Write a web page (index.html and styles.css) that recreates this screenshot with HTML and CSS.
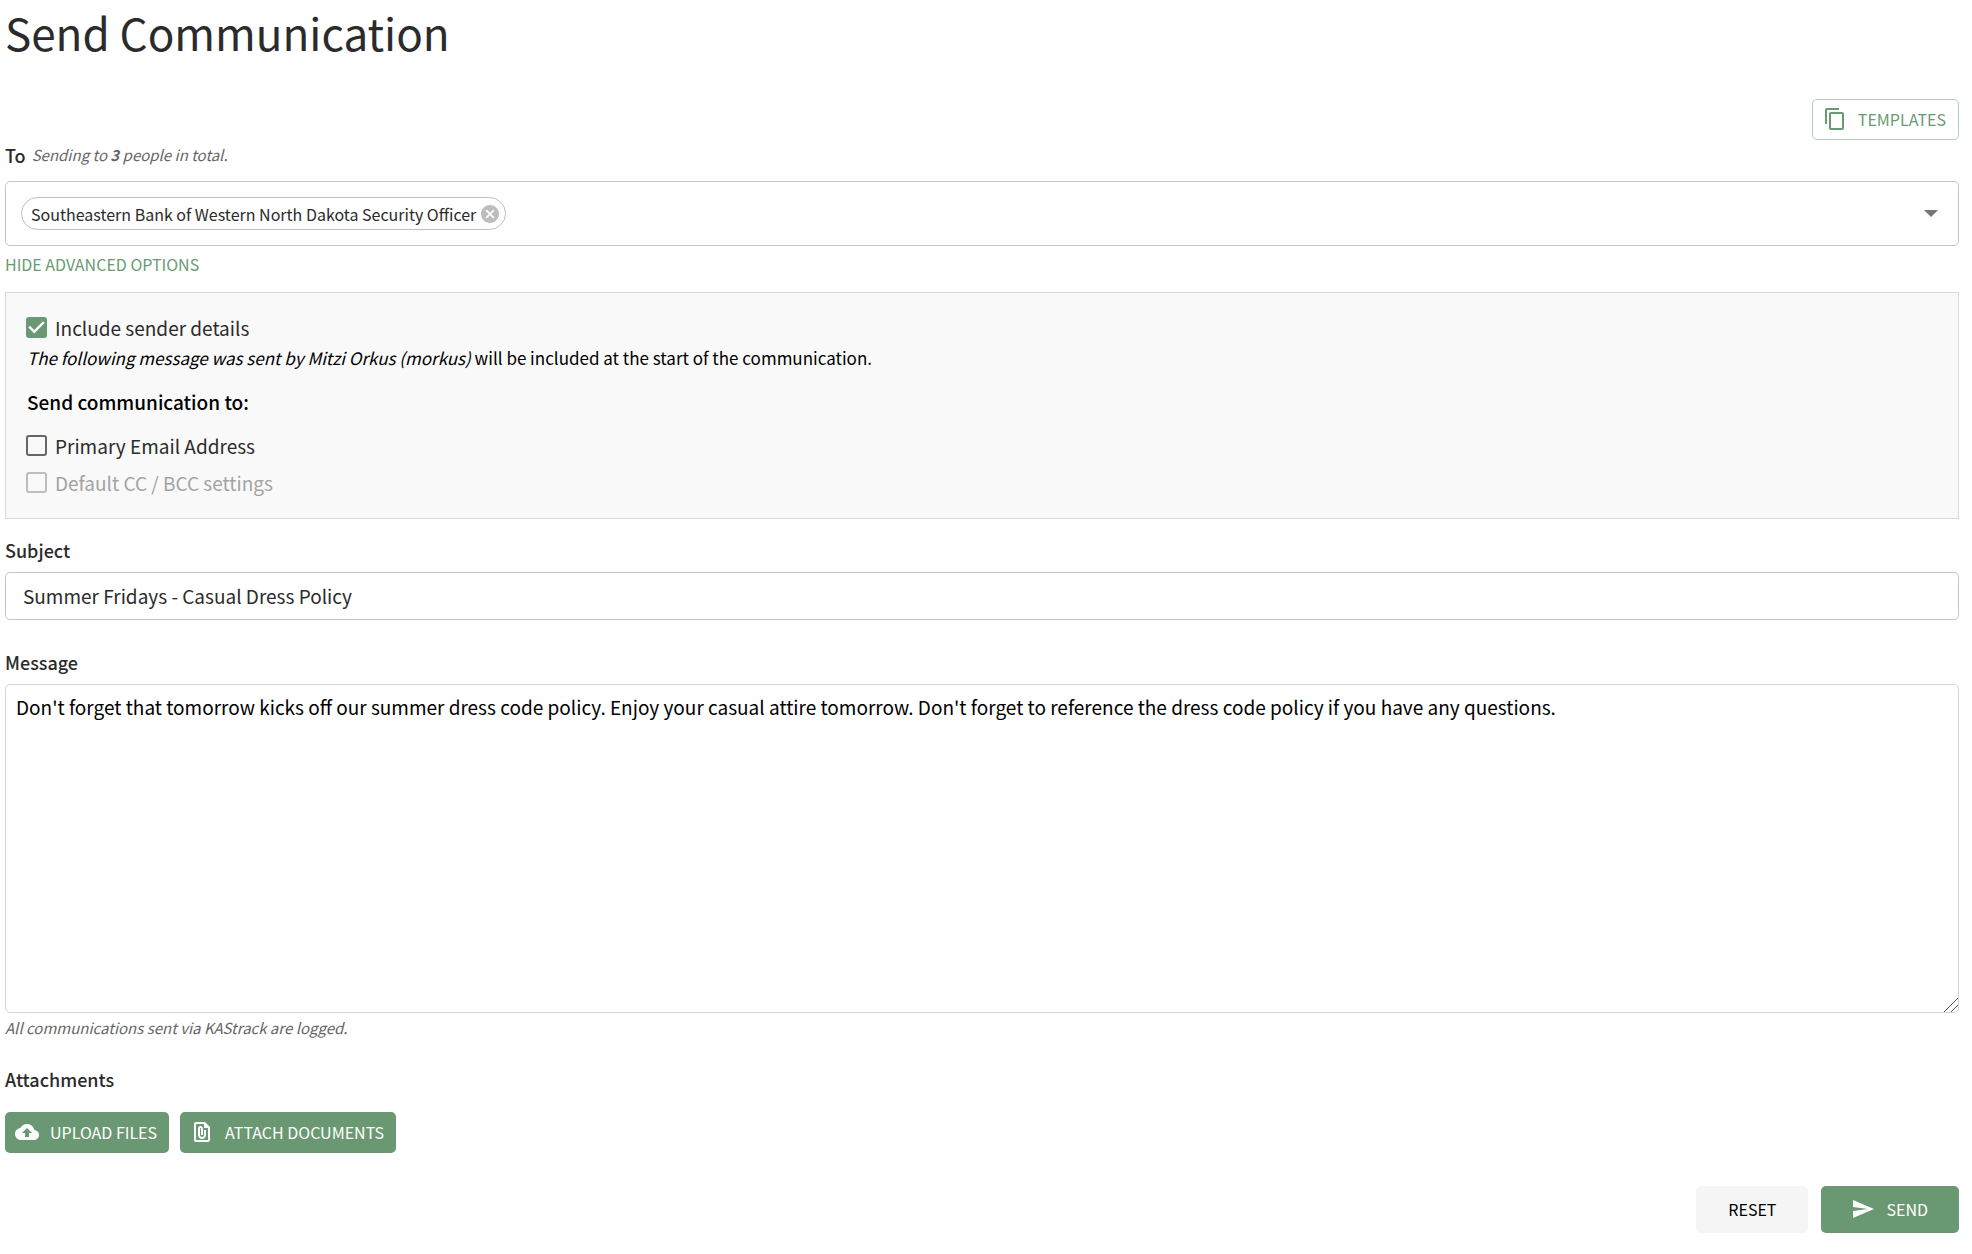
FILE: index.html
```html
<!DOCTYPE html>
<html lang="en">
<head>
  <meta charset="UTF-8">
  <meta name="viewport" content="width=device-width, initial-scale=1">
  <title>Send Communication</title>
  <link rel="stylesheet" href="styles.css">
</head>
<body>
<h1>Send Communication</h1>
<form class="communication">
  <div class="toolbar">
    <button type="button" class="btn btn-outline">
      <svg class="icon" viewBox="0 0 24 24"><path d="M16 1H4c-1.100 0-2 .9-2 2v14h2V3h12V1zm3 4H8c-1.100 0-2 .9-2 2v14c0 1.100.9 2 2 2h11c1.100 0 2-.9 2-2V7c0-1.100-.9-2-2-2zm0 16H8V7h11v14z"/></svg>
      TEMPLATES
    </button>
  </div>

  <div class="to-line">
    <label for="recipients">To</label>
    <span class="hint">Sending to <b>3</b> people in total.</span>
  </div>
  <div class="recipients">
    <div class="chip">
      Southeastern Bank of Western North Dakota Security Officer
      <button type="button" class="chip-delete" aria-label="Remove">
        <svg viewBox="2 2 20 20"><path d="M12 2C6.470 2 2 6.470 2 12s4.470 10 10 10 10-4.470 10-10S17.530 2 12 2zm5 13.590L15.590 17 12 13.410 8.410 17 7 15.590 10.590 12 7 8.410 8.410 7 12 10.590 15.590 7 17 8.410 13.410 12 17 15.590z"/></svg>
      </button>
    </div>
    <button type="button" class="open" id="recipients" aria-haspopup="listbox"></button>
  </div>
  <a href="#advanced" class="toggle">HIDE ADVANCED OPTIONS</a>

  <div class="advanced" id="advanced">
    <label class="check"><input type="checkbox" checked>Include sender details</label>
    <p class="note"><i>The following message was sent by Mitzi Orkus (morkus)</i> will be included at the start of the communication.</p>
    <h2>Send communication to:</h2>
    <label class="check"><input type="checkbox">Primary Email Address</label>
    <label class="check disabled"><input type="checkbox" disabled>Default CC / BCC settings</label>
  </div>

  <div class="field subject">
    <label for="subject">Subject</label>
    <input type="text" id="subject" value="Summer Fridays - Casual Dress Policy">
  </div>

  <div class="field message">
    <label for="message">Message</label>
    <textarea id="message">Don't forget that tomorrow kicks off our summer dress code policy. Enjoy your casual attire tomorrow. Don't forget to reference the dress code policy if you have any questions.</textarea>
    <p class="hint">All communications sent via KAStrack are logged.</p>
  </div>

  <h3>Attachments</h3>
  <div class="attachments">
    <button type="button" class="btn btn-green">
      <svg class="icon" viewBox="0 0 24 24"><path d="M19.350 10.040C18.670 6.590 15.640 4 12 4 9.110 4 6.600 5.640 5.350 8.040 2.340 8.360 0 10.910 0 14c0 3.310 2.690 6 6 6h13c2.760 0 5-2.240 5-5 0-2.640-2.050-4.780-4.650-4.960zM14 13v4h-4v-4H7l5-5 5 5h-3z"/></svg>
      UPLOAD FILES
    </button>
    <button type="button" class="btn btn-green">
      <svg class="icon" viewBox="0 0 24 24"><path d="M15 2H6c-1.100 0-2 .9-2 2v16c0 1.100.9 2 2 2h12c1.100 0 2-.9 2-2V7l-5-5zM6 20V4h8v4h4v12H6zm10-10v5c0 2.210-1.790 4-4 4s-4-1.790-4-4V8.500C8 7.030 9.260 5.860 10.760 6.010 12.060 6.140 13 7.330 13 8.640V15h-2V8.500c0-.28-.22-.5-.5-.5s-.5.22-.5.5V15c0 1.100.9 2 2 2s2-.9 2-2v-5h2z"/></svg>
      ATTACH DOCUMENTS
    </button>
  </div>

  <div class="actions">
    <button type="reset" class="btn btn-reset">RESET</button>
    <button type="submit" class="btn btn-green btn-send">
      <svg class="icon" viewBox="0 0 24 24"><path d="M2 21l21-9L2 3v7l15 2-15 2z"/></svg>
      SEND
    </button>
  </div>
</form>
</body>
</html>
```
FILE: styles.css
```css
* {
  box-sizing: border-box;
}

body {
  margin: 0;
  padding: 0 13px 20px 5px;
  font-family: 'Source Sans Pro', 'Noto Sans CJK SC', sans-serif;
  font-size: 19px;
  line-height: 32px;
  color: #2b2b2b;
  background-color: #fff;
}

button, input, textarea {
  font-family: inherit;
  font-size: inherit;
  color: inherit;
}

h1, h2, h3, p {
  margin: 0;
}

h1 {
  font-size: 44px;
  font-weight: 400;
  line-height: 64px;
}

h3, .field label, .to-line label {
  font-size: 18px;
  font-weight: 500;
  line-height: 30px;
}

.hint {
  font-size: 15px;
  line-height: 24px;
  font-style: italic;
  color: #666;
}

/* buttons */
.btn {
  display: inline-flex;
  align-items: center;
  justify-content: center;
  gap: 11px;
  height: 41px;
  padding: 0 12px 2px 10px;
  border: 0;
  border-radius: 5px;
  font-size: 16px;
  cursor: pointer;
}

.icon {
  width: 24px;
  height: 24px;
  fill: currentColor;
}

.btn-outline {
  border: 1px solid #b5cdb8;
  color: #6a9a72;
  background-color: #fff;
}

.btn-green {
  color: #fff;
  background-color: #6a9872;
}

.toolbar {
  display: flex;
  justify-content: flex-end;
  margin-top: 35px;
}

/* recipients */
.to-line {
  display: flex;
  align-items: center;
  gap: 6px;
  margin-bottom: 11px;
}

.recipients {
  display: flex;
  align-items: center;
  justify-content: space-between;
  min-height: 65px;
  padding: 15px;
  border: 1px solid #c4c4c4;
  border-radius: 5px;
}

.chip {
  display: flex;
  align-items: center;
  gap: 5px;
  height: 33px;
  padding: 0 6px 0 9px;
  border: 1px solid #bdbdbd;
  border-radius: 17px;
  font-size: 16px;
  line-height: 30px;
}

.chip-delete {
  display: flex;
  width: 18px;
  height: 18px;
  padding: 0;
  border: 0;
  background: none;
  cursor: pointer;
}

.chip-delete svg {
  width: 18px;
  height: 18px;
  fill: #bdbdbd;
}

.open {
  display: flex;
  padding: 5px;
  border: 0;
  background: none;
  cursor: pointer;
}

.open::before {
  content: '';
  border: 7px solid transparent;
  border-top-color: #757575;
  border-bottom: 0;
}

.toggle {
  display: block;
  margin-bottom: 10px;
  font-size: 16px;
  line-height: 36px;
  color: #6a9a72;
  text-decoration: none;
}

/* advanced options */
.advanced {
  padding: 16px 20px 17px;
  border: 1px solid #d9d9d9;
  background-color: #f9f9f9;
}

.check {
  display: flex;
  align-items: center;
  gap: 8px;
  line-height: 37px;
}

.check.disabled {
  color: #a3a3a3;
}

.check input {
  appearance: none;
  display: flex;
  width: 21px;
  height: 21px;
  margin: 0;
  border: 2px solid #666;
  border-radius: 3px;
}

.check input:checked {
  border: 0;
  background-color: #6a9872;
}

.check input:checked::before {
  content: '';
  width: 21px;
  height: 21px;
  background-color: #fff;
  clip-path: polygon(39% 78%, 11% 50%, 19% 42%, 39% 62%, 81% 20%, 89% 28%);
}

.check input:disabled {
  border-color: #bdbdbd;
}

.note {
  padding-left: 1px;
  font-size: 17px;
  line-height: 24px;
  color: #000;
}

h2 {
  margin: 16px 0 9px;
  padding-left: 1px;
  font-size: 19px;
  font-weight: 500;
  line-height: 32px;
  color: #000;
}

/* fields */
.field {
  display: flex;
  flex-direction: column;
}

.field label {
  margin-bottom: 7px;
}

.subject {
  margin-top: 16px;
}

.subject input {
  height: 48px;
  padding: 0 17px 2px;
  border: 1px solid #c4c4c4;
  border-radius: 5px;
}

.message {
  margin-top: 27px;
}

.message textarea {
  height: 329px;
  padding: 8px 10px;
  border: 1px solid #d5d5d5;
  border-radius: 5px;
  line-height: 28px;
  color: #000;
  resize: vertical;
}

.message textarea::-webkit-resizer {
  background: linear-gradient(135deg, transparent 51%, #555 51%, #555 56%, transparent 56%, transparent 75%, #555 75%, #555 80%, transparent 80%);
}

.message .hint {
  margin-top: 3px;
}

h3 {
  margin: 24px 0 18px;
}

.attachments {
  display: flex;
  gap: 11px;
}

.actions {
  display: flex;
  justify-content: flex-end;
  gap: 13px;
  margin-top: 33px;
}

.actions .btn {
  height: 47px;
  padding: 0 32px 2px;
}

.actions .btn-send {
  padding: 0 31px 2px 30px;
}

.btn-reset {
  color: #000;
  background-color: #f5f5f5;
}
```
